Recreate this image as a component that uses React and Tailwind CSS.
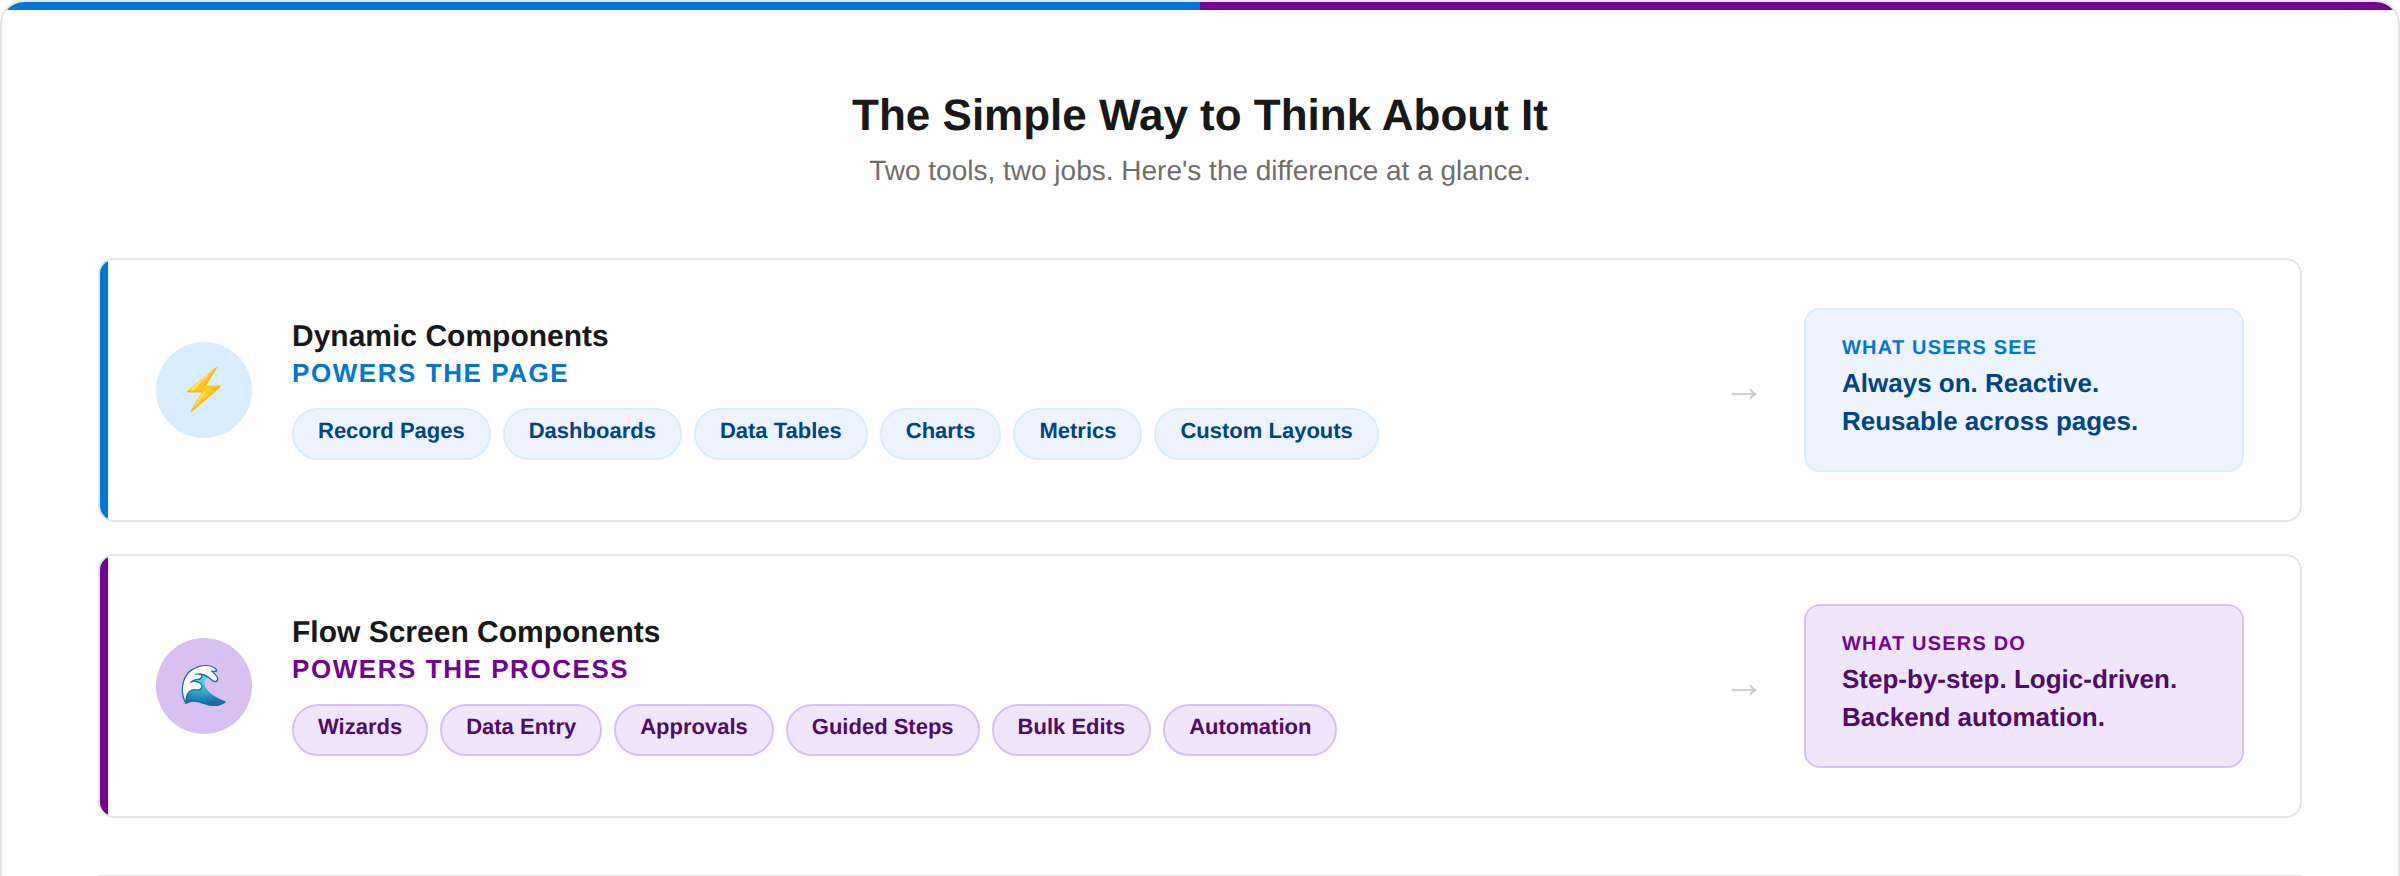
const rows = [
  {
    title: 'Dynamic Components',
    tagline: 'POWERS THE PAGE',
    emoji: '⚡',
    chips: ['Record Pages', 'Dashboards', 'Data Tables', 'Charts', 'Metrics', 'Custom Layouts'],
    label: 'WHAT USERS SEE',
    lines: ['Always on. Reactive.', 'Reusable across pages.'],
    bar: 'bg-[#0176d3]',
    circle: 'bg-[#d8edff]',
    tag: 'text-[#0176d3]',
    chip: 'bg-[#eef4ff] border-[#d8edff] text-[#014486]',
    box: 'bg-[#eef4ff] border-[#d8edff]',
    body: 'text-[#014486]',
  },
  {
    title: 'Flow Screen Components',
    tagline: 'POWERS THE PROCESS',
    emoji: '🌊',
    chips: ['Wizards', 'Data Entry', 'Approvals', 'Guided Steps', 'Bulk Edits', 'Automation'],
    label: 'WHAT USERS DO',
    lines: ['Step-by-step. Logic-driven.', 'Backend automation.'],
    bar: 'bg-[#730394]',
    circle: 'bg-[#d9c0f2]',
    tag: 'text-[#730394]',
    chip: 'bg-[#f0e6fb] border-[#d9c0f2] text-[#4f0a6b]',
    box: 'bg-[#f0e6fb] border-[#d9c0f2]',
    body: 'text-[#4f0a6b]',
  },
]

function Row({ row }) {
  return (
    <div className="flex items-center h-[264px] rounded-2xl border-2 border-[#e5e5e5] overflow-hidden pr-14 bg-white">
      <div className={`w-2 self-stretch flex-shrink-0 ${row.bar}`} />
      <div className={`ml-12 w-24 h-24 rounded-full flex items-center justify-center text-[40px] leading-none flex-shrink-0 ${row.circle}`}>
        {row.emoji}
      </div>
      <div className="ml-10 pb-[3px] flex-1 min-w-0">
        <p className="text-[30px] leading-[40px] font-bold text-[#181818]">{row.title}</p>
        <p className={`text-[26px] leading-[32px] font-bold tracking-[1.56px] ${row.tag}`}>{row.tagline}</p>
        <div className="flex gap-3 mt-[19px]">
          {row.chips.map(c => (
            <span key={c} className={`h-[52px] px-6 rounded-full border-2 text-[22px] leading-[41px] font-bold ${row.chip}`}>{c}</span>
          ))}
        </div>
      </div>
      <div className="text-[42px] leading-none text-[#cccccc] mr-[39px] -mt-1.5">→</div>
      <div className={`w-[440px] h-[164px] rounded-2xl border-2 px-9 pt-[23px] flex-shrink-0 ${row.box}`}>
        <p className={`text-[20px] leading-[30px] mb-px font-bold tracking-[1.2px] ${row.tag}`}>{row.label}</p>
        <p className={`text-[26px] leading-[38px] font-bold ${row.body}`}>{row.lines[0]}</p>
        <p className={`text-[26px] leading-[38px] font-bold ${row.body}`}>{row.lines[1]}</p>
      </div>
    </div>
  )
}

export default function App() {
  return (
    <div className="h-[876px] overflow-hidden bg-white font-['Liberation_Sans',Arial,sans-serif] [text-rendering:geometricPrecision]">
      <div className="h-[900px] rounded-t-[24px] border-2 border-[#e5e5e5] overflow-hidden bg-white">
        <div className="flex h-2">
          <div className="flex-1 bg-[#0176d3]" />
          <div className="flex-1 bg-[#730394]" />
        </div>
        <div className="px-24 pt-[78px]">
          <div className="text-center">
            <h1 className="text-[44px] leading-[56px] font-bold text-[#181818]">The Simple Way to Think About It</h1>
            <p className="text-[28px] leading-[40px] text-[#706e6b] mt-[7px]">Two tools, two jobs. Here's the difference at a glance.</p>
          </div>
          <div className="mt-[67px] flex flex-col gap-8">
            {rows.map(r => <Row key={r.title} row={r} />)}
          </div>
          <div className="mt-[57px] border-t-2 border-[#e5e5e5]" />
        </div>
      </div>
    </div>
  )
}
